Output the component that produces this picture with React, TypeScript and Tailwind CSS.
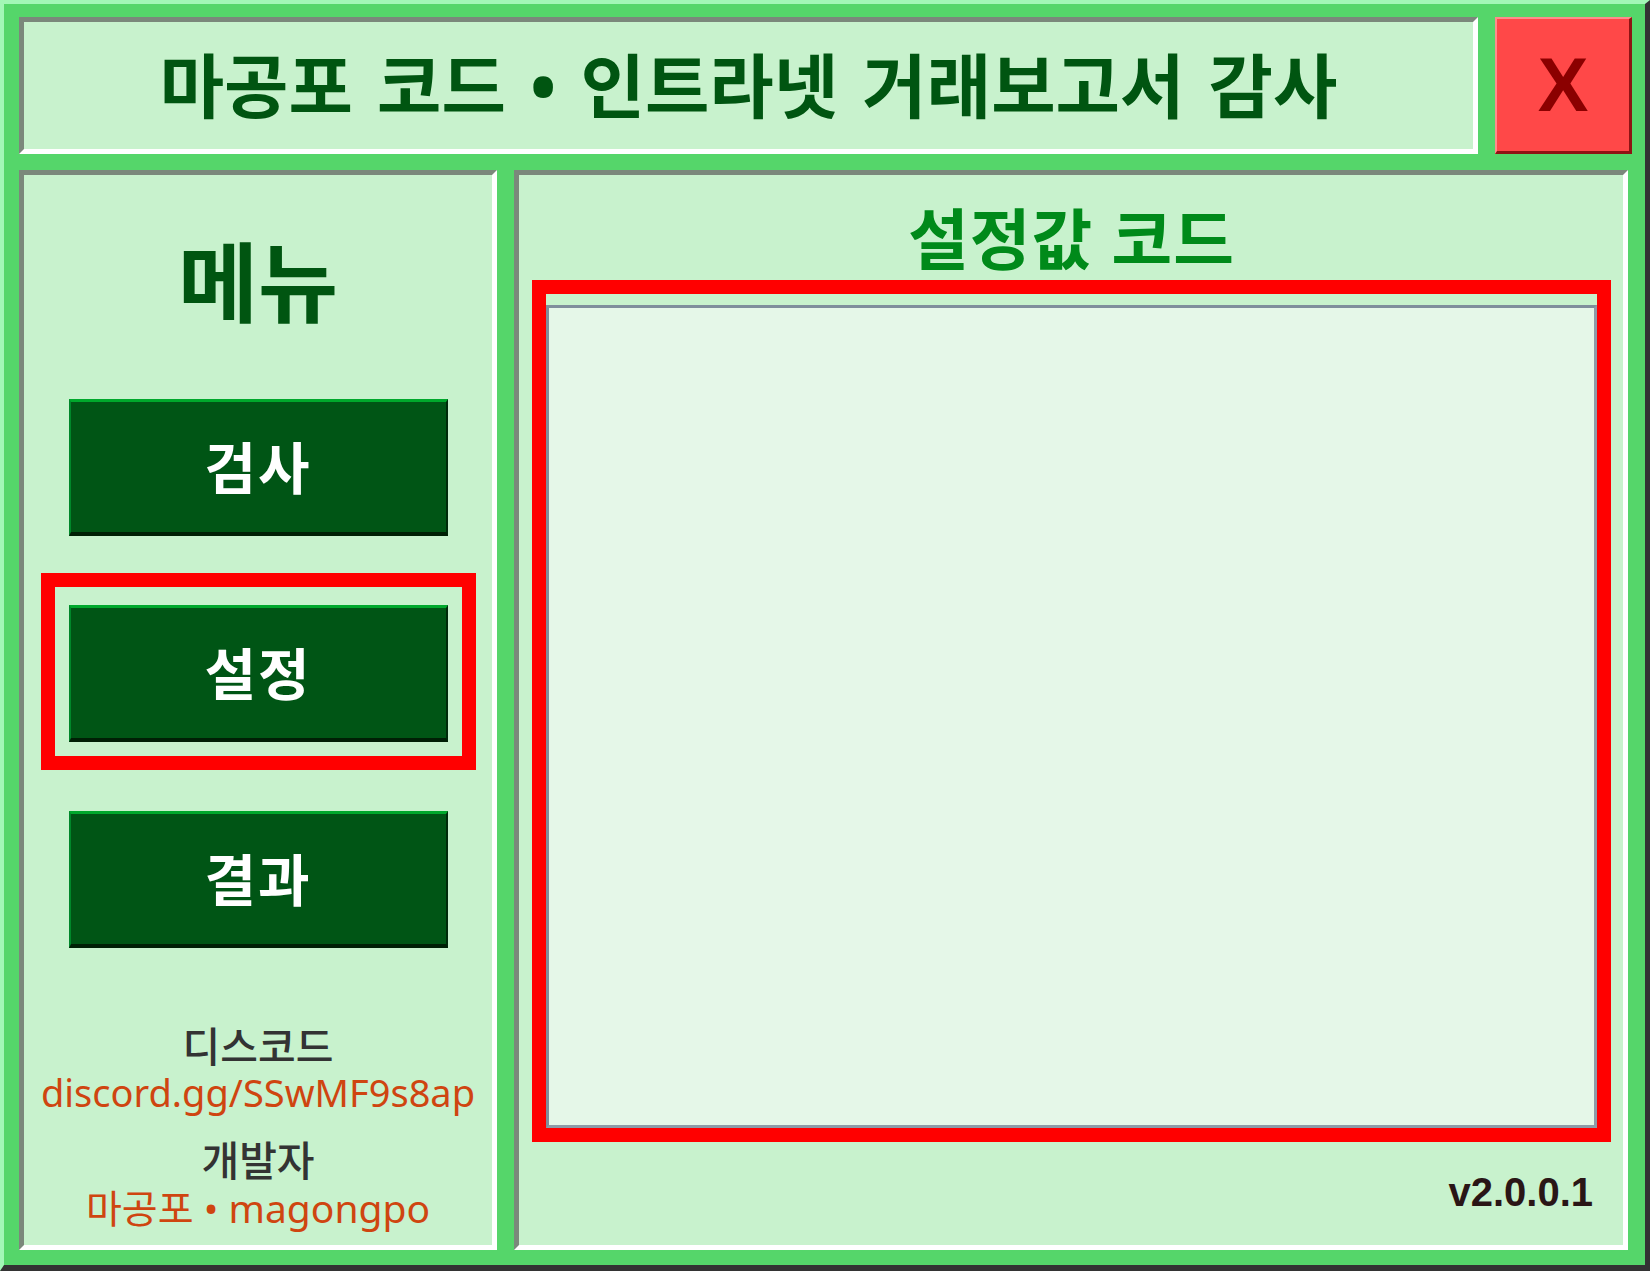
import React from 'react';

// 인트라넷 거래보고서 감사 도구 - 설정 화면
const sunken = 'border-[5px] border-t-[#7b887b] border-l-[#7b887b] border-b-white border-r-white bg-[#c8f2cd]';
const kr = "font-['Noto_Sans','Noto_Sans_CJK_KR',sans-serif]";

const MENU = [
  { label: '검사', active: false },
  { label: '설정', active: true },
  { label: '결과', active: false },
];

const MenuButton: React.FC<{ label: string; active: boolean }> = ({ label, active }) => (
  <div
    className={
      'border-[14px] pt-[18px] pb-[14px] px-[14px] ' +
      (active ? 'border-[#ff0000]' : 'border-transparent')
    }
  >
    <button
      className={
        'w-[379px] h-[137px] flex items-center justify-center bg-[#005515] border-t-[3px] border-l-2 border-b-[4px] border-r-2 border-t-[#00a82c] border-l-[#00872a] border-b-[#001f05] border-r-[#002a0a] text-white text-[56px] font-bold leading-none tracking-[2px] ' +
        kr
      }
    >
      {label}
    </button>
  </div>
);

const App: React.FC = () => {
  return (
    <div
      className={
        'w-[1650px] h-[1271px] flex flex-col gap-[16px] bg-[#55d66a] border-t-4 border-l-4 border-t-[#a2f7b6] border-l-[#a2f7b6] border-r-[5px] border-b-[6px] border-r-[#333333] border-b-[#333333] pt-[13px] pl-[15px] pr-[13px] pb-[15px] ' +
        kr
      }
    >
      {/* 제목 표시줄 */}
      <div className="flex h-[137px] gap-[17px]">
        <div className={'flex-1 flex items-center justify-center ' + sunken}>
          <h1 className="text-[70px] font-bold leading-none [word-spacing:6px] text-[#005511]">
            마공포 코드 • 인트라넷 거래보고서 감사
          </h1>
        </div>
        <button className="w-[137px] flex items-center justify-center bg-[#ff4848] border-t-2 border-l-2 border-b-[3px] border-r-[3px] border-t-[#ff8c8c] border-l-[#ff8c8c] border-b-[#8e1414] border-r-[#8e1414] text-[#8b0000] text-[76px] font-bold leading-none font-['Liberation_Sans',sans-serif]">
          X
        </button>
      </div>

      <div className="flex flex-1 min-h-0 gap-[17px] pr-[4px]">
        {/* 메뉴 */}
        <div className={'w-[478px] flex flex-col items-center ' + sunken}>
          <div className="h-[192px] pt-[22px] flex items-center justify-center">
            <h2 className="text-[87px] font-bold leading-none text-[#005511]">메뉴</h2>
          </div>
          <div className="flex flex-col gap-[9px]">
            {MENU.map((m) => (
              <MenuButton key={m.label} label={m.label} active={m.active} />
            ))}
          </div>
          <div className="mt-[48px] flex flex-col items-center">
            <div className="h-[44px] leading-[44px] text-[41px] font-medium text-[#333333]">디스코드</div>
            <div className="h-[48px] leading-[48px] text-[38px] text-[#cf4510]">discord.gg/SSwMF9s8ap</div>
            <div className="mt-[22px] h-[44px] leading-[44px] text-[41px] font-medium text-[#333333]">개발자</div>
            <div className="mt-[4px] h-[44px] leading-[44px] text-[39px] text-[#cf4510]">마공포 • magongpo</div>
          </div>
        </div>

        {/* 설정값 */}
        <div className={'flex-1 flex flex-col pl-[13px] pr-[12px] ' + sunken}>
          <div className="h-[105px] pt-[20px] flex items-center justify-center">
            <h2 className="text-[66px] font-bold leading-none tracking-[1px] text-[#008a1a]">설정값 코드</h2>
          </div>
          <div className="h-[862px] border-[14px] border-[#ff0000] pt-[11px]">
            <textarea
              readOnly
              className="w-full h-full resize-none outline-none border-[3px] border-t-[#7f8e9c] border-l-[#7f8e9c] border-b-[#8d9ba7] border-r-[#8d9ba7] bg-[#e5f7e8]"
            />
          </div>
          <div className="flex-1 flex items-center justify-end pr-[18px] pb-[4px]">
            <span className="text-[40px] font-bold leading-none text-[#2a1616] font-['Liberation_Sans',sans-serif]">
              v2.0.0.1
            </span>
          </div>
        </div>
      </div>
    </div>
  );
};

export default App;
